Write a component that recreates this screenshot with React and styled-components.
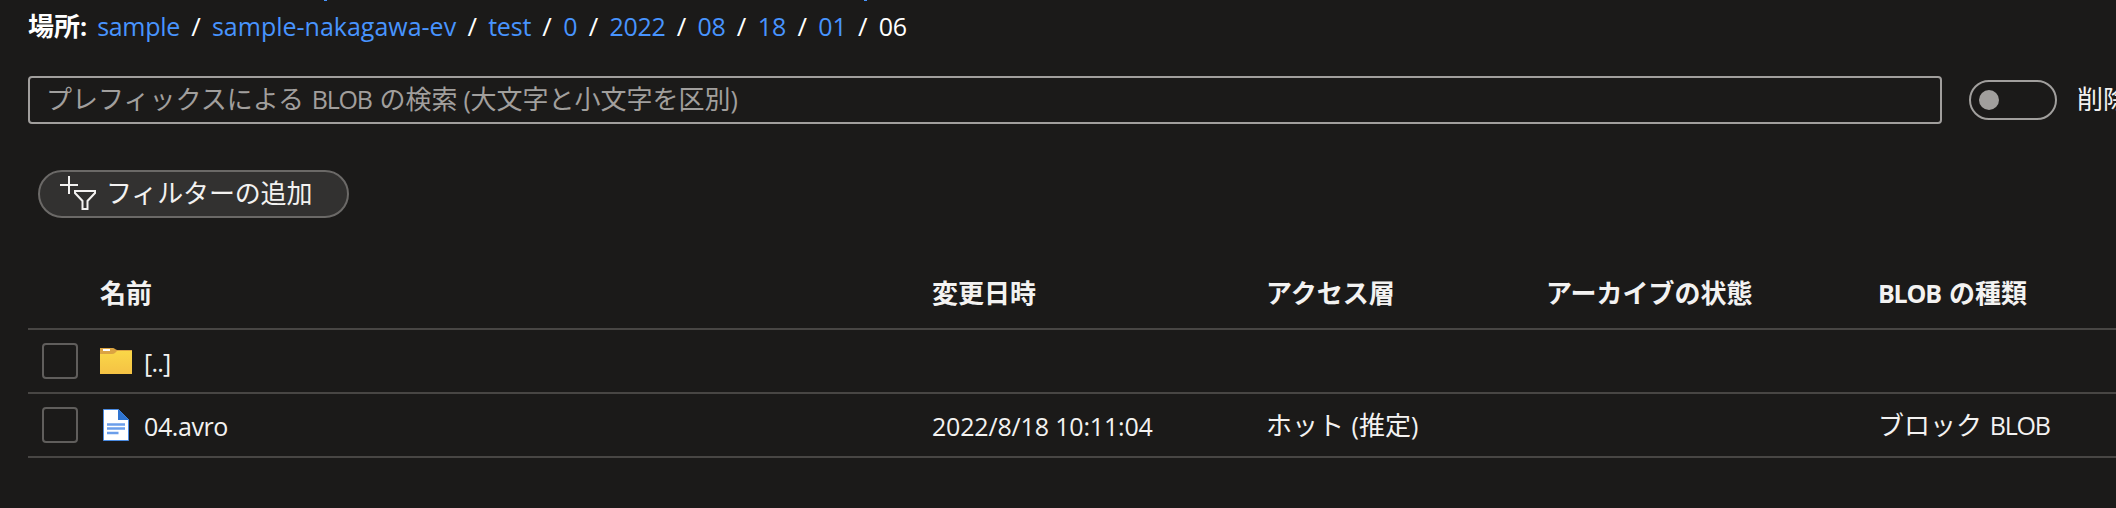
import React from 'react';
import styled, { createGlobalStyle } from 'styled-components';

const Global = createGlobalStyle`
  body { margin: 0; background: #1b1a19; }
`;
const Page = styled.main`
  width: 2116px; height: 508px; overflow: hidden; box-sizing: border-box;
  background: #1b1a19; color: #f3f2f1;
  font: 26px/36px "Noto Sans CJK JP", sans-serif;
  white-space: nowrap;
`;
const Latin = styled.span`
  font-family: "Open Sans", "Noto Sans", sans-serif;
  font-size: 25px;
  letter-spacing: ${p => p.$track || 0}px;
  word-spacing: ${p => p.$space || 0}px;
`;
/* Bottom edge of the line scrolled out above the breadcrumb */
const ScrolledLine = styled.div`
  display: flex; gap: 537px; height: 1px; padding-left: 324px;
`;
const Tail = styled.i`
  width: 3px; height: 1px; background: #4894fe;
`;
const Breadcrumb = styled.nav`
  display: flex; align-items: baseline; height: 36px; padding: 6px 0 0 28px;
`;
const Label = styled.strong`
  font-weight: 700; margin-right: 10px; color: #fff;
`;
const Crumb = styled.a`
  color: ${p => (p.$current ? '#ffffff' : '#4894fe')};
`;
const Slash = styled.span`
  width: 32px; text-align: center; color: #fff;
  font-family: "Open Sans", sans-serif; font-size: 26px;
`;
const SearchRow = styled.div`
  display: flex; align-items: center; height: 48px; margin-top: 33px; padding-left: 28px;
`;
const SearchBox = styled.div`
  box-sizing: border-box; flex: none; width: 1914px; height: 48px; line-height: 40px;
  border: 2px solid #a19f9d; border-radius: 4px; padding-left: 16px; color: #a19f9d;
`;
const Toggle = styled.div`
  box-sizing: border-box; flex: none; width: 88px; height: 40px; margin: 0 20px 0 27px;
  border: 2px solid #a19f9d; border-radius: 20px; padding-left: 8px;
  display: flex; align-items: center;
`;
const Knob = styled.i`
  width: 20px; height: 20px; border-radius: 50%; background: #a19f9d;
`;
const ToggleLabel = styled.span`
  padding-bottom: 4px;
`;
const FilterButton = styled.div`
  box-sizing: border-box; width: 311px; height: 48px; margin: 46px 0 0 38px;
  border: 2px solid #6b6967; border-radius: 24px; background: #323130;
  display: flex; align-items: center; padding-left: 20px; gap: 10px;
`;
const FilterText = styled.span`
  padding-bottom: 4px; letter-spacing: -0.15px;
`;
const Table = styled.section`
  margin: 50px 0 0 28px;
`;
const Row = styled.div`
  display: grid; grid-template-columns: 72px 832px 334px 280px 332px 1fr; align-items: center;
  box-sizing: border-box; height: ${p => (p.$head ? 62 : 64)}px; border-bottom: 2px solid #484644;
  font-weight: ${p => (p.$head ? 700 : 400)};
`;
const HeadCell = styled.div`
  padding-bottom: 12px;
`;
const Cell = styled.div`
  display: flex; align-items: center;
`;
const Value = styled.div`
  padding-bottom: ${p => (p.$raised ? 2 : 0)}px;
  padding-top: ${p => (p.$raised ? 0 : 1)}px;
`;
const Checkbox = styled.div`
  box-sizing: border-box; width: 36px; height: 36px; margin-left: 14px;
  border: 2px solid #605e5c; border-radius: 4px;
`;
const IconBox = styled.span`
  width: 32px; height: 32px; margin-right: 12px; display: flex;
`;

const FilterIcon = () => (
  <svg width="36" height="36" viewBox="0 0 36 36" fill="none" stroke="#f3f2f1" strokeWidth="2">
    <path d="M0 9H18M9 0V18M15 15H35V17L27.5 25V33H22.5V25L15 17Z" />
  </svg>
);
const FolderIcon = () => (
  <svg width="32" height="32" viewBox="0 0 32 32">
    <defs><linearGradient id="fold" x1="0" y1="0" x2="0" y2="1"><stop stopColor="#fad748" /><stop offset="1" stopColor="#f5c244" /></linearGradient></defs>
    <path d="M0 3H13Q14 3 15 4L17 5H32V9H0Z" fill="#dba442" />
    <path d="M0 9H12Q14 9 15 8L17 6H32V29H0Z" fill="url(#fold)" />
    <rect x="3" y="4" width="7" height="2" fill="#fff" />
  </svg>
);
const FileIcon = () => (
  <svg width="32" height="32" viewBox="0 0 32 32">
    <path d="M3.5 .5H18.5L28.5 10.5V31.5H3.5Z" fill="#fff" stroke="#4a8ae0" />
    <path d="M18 0L29 11H18Z" fill="#2f74d0" />
    <path d="M7 15.5H25M7 19.5H25M7 24H18.5" stroke="#6b9eea" strokeWidth="2.4" />
  </svg>
);

const crumbs = [['sample', -0.3], ['sample-nakagawa-ev', 0], ['test', -0.2], ['0', 0], ['2022', -0.3], ['08', -0.2], ['18', 0], ['01', 0], ['06', -0.3]];

export default function App() {
  return (
    <Page>
      <Global />
      <ScrolledLine><Tail /><Tail /></ScrolledLine>
      <Breadcrumb>
        <Label>場所<Latin>:</Latin></Label>
        {crumbs.map(([text, track], i) => (
          <React.Fragment key={text}>
            {i > 0 && <Slash>/</Slash>}
            <Crumb $current={i === crumbs.length - 1}><Latin $track={track}>{text}</Latin></Crumb>
          </React.Fragment>
        ))}
      </Breadcrumb>
      <SearchRow>
        <SearchBox>プレフィックスによる<Latin $track={-1.2} $space={2.5}> BLOB </Latin>の検索<Latin $track={-0.5}> (</Latin>大文字と小文字を区別<Latin>)</Latin></SearchBox>
        <Toggle><Knob /></Toggle>
        <ToggleLabel>削除</ToggleLabel>
      </SearchRow>
      <FilterButton><FilterIcon /><FilterText>フィルターの追加</FilterText></FilterButton>
      <Table>
        <Row $head>
          <HeadCell />
          <HeadCell>名前</HeadCell>
          <HeadCell>変更日時</HeadCell>
          <HeadCell>アクセス層</HeadCell>
          <HeadCell>アーカイブの状態</HeadCell>
          <HeadCell><Latin $track={-1.2} $space={3}>BLOB </Latin>の種類</HeadCell>
        </Row>
        <Row>
          <Checkbox />
          <Cell><IconBox><FolderIcon /></IconBox><Value><Latin $track={-0.8}>[..]</Latin></Value></Cell>
        </Row>
        <Row>
          <Checkbox />
          <Cell><IconBox><FileIcon /></IconBox><Value><Latin $track={-0.4}>04.avro</Latin></Value></Cell>
          <Value><Latin $track={-0.17}>2022/8/18 10:11:04</Latin></Value>
          <Value $raised>ホット<Latin $space={1}> (</Latin>推定<Latin>)</Latin></Value>
          <Value />
          <Value $raised>ブロック<Latin $track={-1.2} $space={2.5}> BLOB</Latin></Value>
        </Row>
      </Table>
    </Page>
  );
}
